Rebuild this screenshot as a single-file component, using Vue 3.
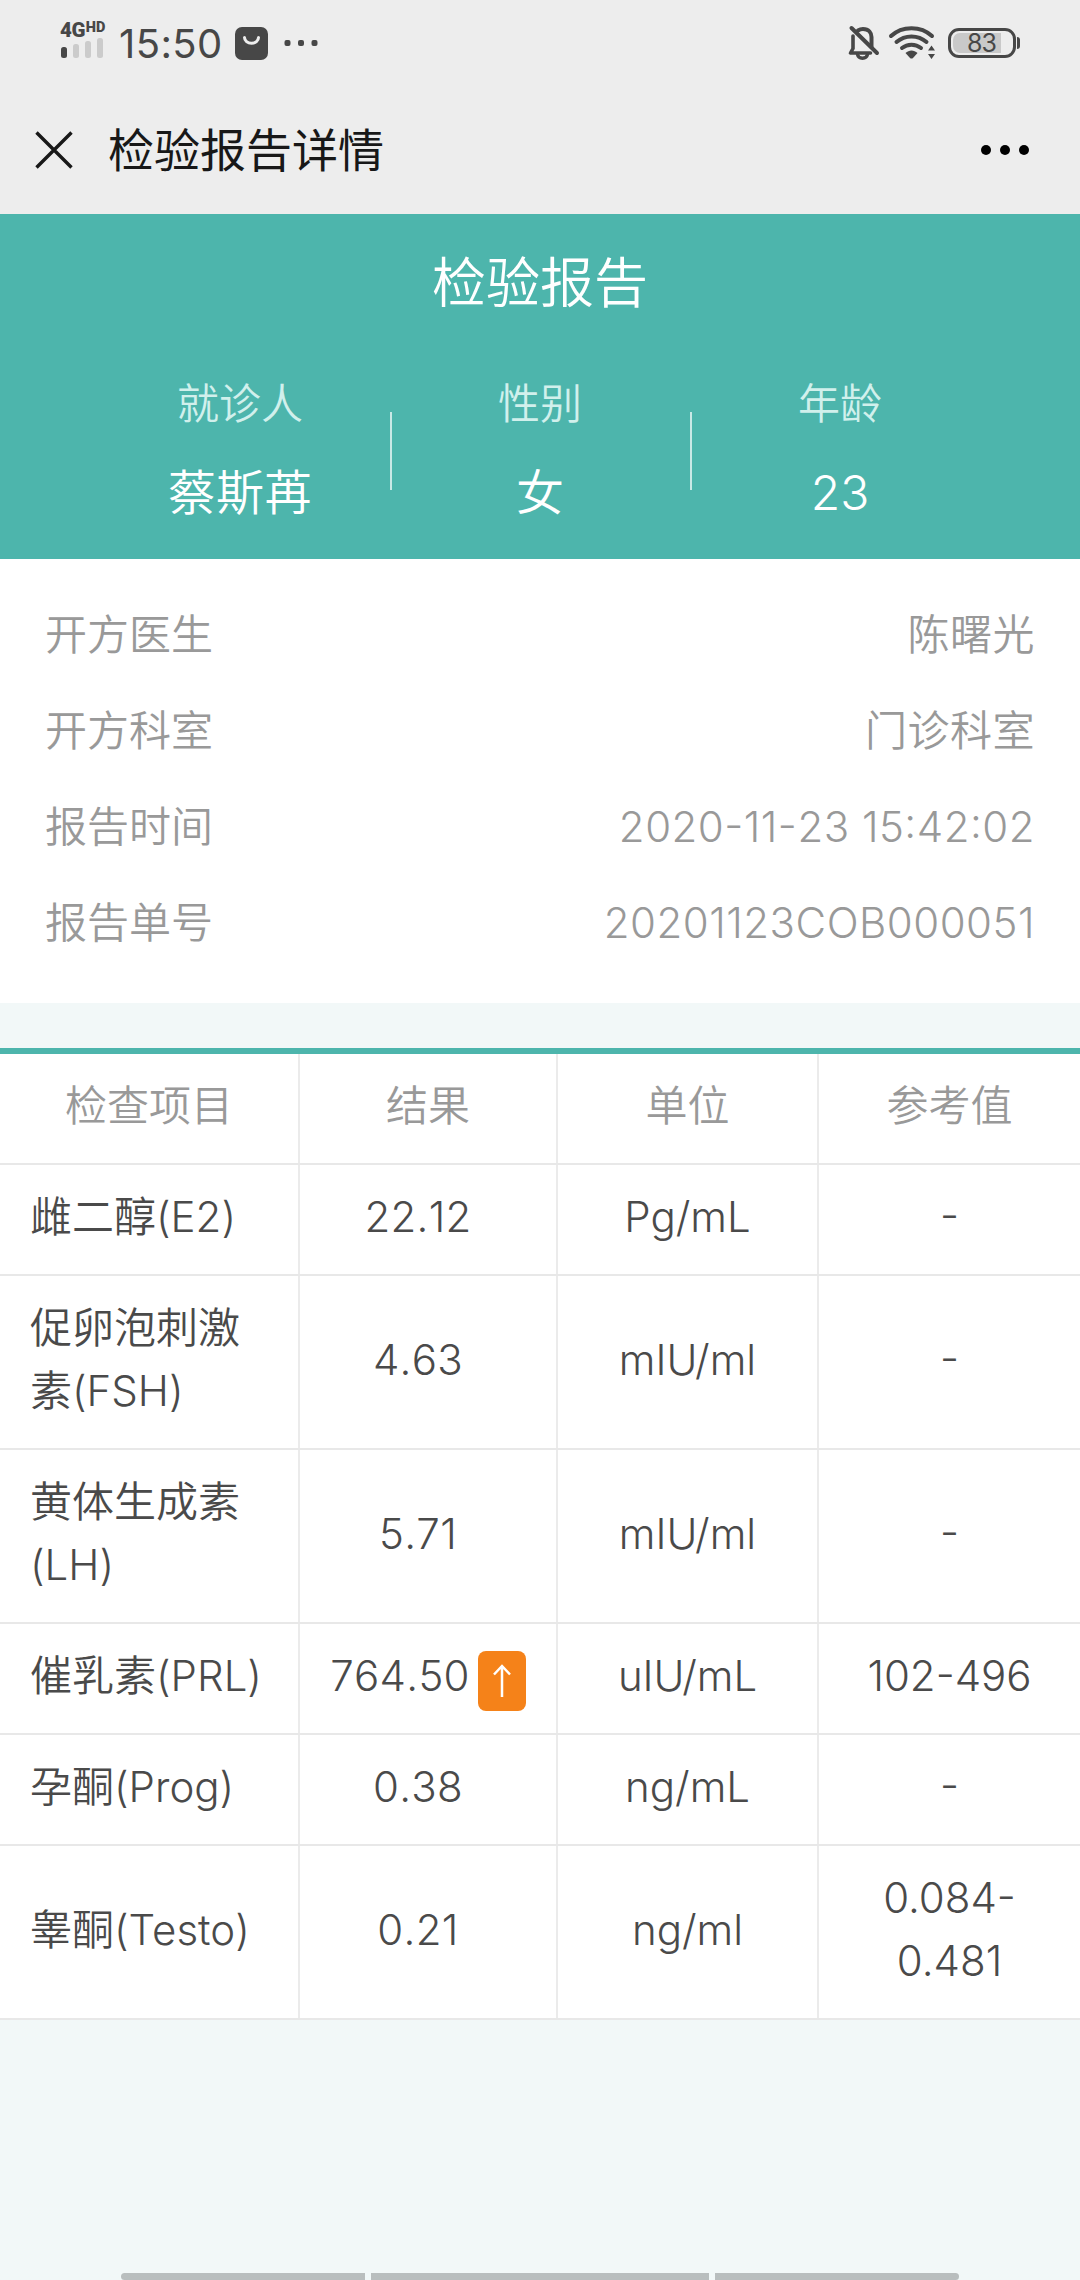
<template>
  <div class="page">
    <header class="topbar">
      <div class="status">
        <div class="signal">
          <div class="network">4G<sup>HD</sup></div>
          <svg width="44" height="21" viewBox="0 0 44 21">
            <rect x="1" y="10" width="6" height="11" rx="2.5" fill="#474747" />
            <rect x="13" y="7" width="6" height="14" rx="2.5" fill="#cbcbcb" />
            <rect x="25" y="4" width="6" height="17" rx="2.5" fill="#cbcbcb" />
            <rect x="37" y="1" width="6" height="20" rx="2.5" fill="#cbcbcb" />
          </svg>
        </div>
        <span class="clock">15:50</span>
        <svg class="app-icon" width="33" height="33" viewBox="0 0 33 33">
          <rect width="33" height="33" rx="7" fill="#474747" />
          <path d="M9.5 10.5a7 5.8 0 0 0 14 0" fill="none" stroke="#ededed" stroke-width="3" stroke-linecap="round" />
        </svg>
        <svg class="more-icon" width="34" height="8" viewBox="0 0 34 8">
          <rect x="0.5" y="1" width="6" height="6" rx="2" fill="#474747" />
          <rect x="14" y="1" width="6" height="6" rx="2" fill="#474747" />
          <rect x="27.5" y="1" width="6" height="6" rx="2" fill="#474747" />
        </svg>
        <div class="status-right">
          <svg width="32" height="36" viewBox="0 0 32 36">
            <g fill="none" stroke="#474747" stroke-width="4" stroke-linecap="round" stroke-linejoin="round">
              <path d="M5 11v12.500l-2.500 4.500h20" stroke-width="3.600" />
              <path d="M10 5.500c1.500-1 3-1.500 5-1.500 6 0 8.500 4 8.500 8v10" />
              <path d="M3.500 3l25.500 25" />
              <path d="M9.500 29.500c1 5 9 5 10 0" stroke-width="3.400" />
            </g>
          </svg>
          <svg class="wifi" width="48" height="36" viewBox="0 0 48 36">
            <g fill="none" stroke="#474747" stroke-width="4" stroke-linecap="round">
              <path d="M3 11c11-10.500 30-10.500 41 0" />
              <path d="M8.500 17c8.500-7.500 21.500-7.500 30 0" />
              <path d="M14 23c5.500-4.500 13.500-4.500 19 0" />
            </g>
            <path d="M17.500 28c3.500-3.500 8.500-3.500 12 0l-4.500 5q-1.500 1.200-3 0z" fill="#474747" />
            <path d="M43.500 20.500l3.500 5h-7zM43.500 34l3.500-5h-7z" fill="#474747" />
          </svg>
          <div class="battery">
            <span class="level"><b>83</b></span>
          </div>
        </div>
      </div>
      <div class="navbar">
        <svg width="38" height="38" viewBox="0 0 38 38">
          <path d="M1.500 1.500l35 35M36.500 1.500l-35 35" stroke="#181818" stroke-width="3.400" />
        </svg>
        <h1>检验报告详情</h1>
        <svg class="menu" width="50" height="12" viewBox="0 0 50 12">
          <circle cx="6" cy="6" r="5" />
          <circle cx="25" cy="6" r="5" />
          <circle cx="44" cy="6" r="5" />
        </svg>
      </div>
    </header>

    <section class="summary">
      <h2>检验报告</h2>
      <div class="patient">
        <div v-for="item in patient" :key="item.label" class="patient-item">
          <span class="label">{{ item.label }}</span>
          <span class="value">{{ item.value }}</span>
        </div>
      </div>
    </section>

    <section class="info">
      <div v-for="row in info" :key="row.label" class="info-row">
        <span>{{ row.label }}</span>
        <span class="info-value">{{ row.value }}</span>
      </div>
    </section>

    <section class="report">
      <div class="row head">
        <div v-for="title in columns" :key="title" class="cell">{{ title }}</div>
      </div>
      <div v-for="item in results" :key="item.name" class="row">
        <div class="cell name">{{ item.name }}</div>
        <div class="cell result" :class="{ normal: !item.high }">
          {{ item.result }}
          <span v-if="item.high" class="flag">
            <svg width="18" height="34" viewBox="0 0 18 34">
              <path d="M9 33V2M1 10.500l8-8.500 8 8.500" fill="none" stroke="#fff" stroke-width="2.500" />
            </svg>
          </span>
        </div>
        <div class="cell">{{ item.unit }}</div>
        <div class="cell range">{{ item.range }}</div>
      </div>
    </section>

    <footer class="gesture-bar">
      <i></i><i class="middle"></i><i></i>
    </footer>
  </div>
</template>

<script setup>
const patient = [
  { label: '就诊人', value: '蔡斯苒' },
  { label: '性别', value: '女' },
  { label: '年龄', value: '23' },
];

const info = [
  { label: '开方医生', value: '陈曙光' },
  { label: '开方科室', value: '门诊科室' },
  { label: '报告时间', value: '2020-11-23 15:42:02' },
  { label: '报告单号', value: '20201123COB000051' },
];

const columns = ['检查项目', '结果', '单位', '参考值'];

const results = [
  { name: '雌二醇(E2)', result: '22.12', unit: 'Pg/mL', range: '-' },
  { name: '促卵泡刺激素(FSH)', result: '4.63', unit: 'mIU/ml', range: '-' },
  { name: '黄体生成素(LH)', result: '5.71', unit: 'mIU/ml', range: '-' },
  { name: '催乳素(PRL)', result: '764.50', unit: 'uIU/mL', range: '102-496', high: true },
  { name: '孕酮(Prog)', result: '0.38', unit: 'ng/mL', range: '-' },
  { name: '睾酮(Testo)', result: '0.21', unit: 'ng/ml', range: '0.084-0.481' },
];
</script>

<style>
body {
  background: #f2f8f8;
}
</style>

<style scoped>
.page {
  display: flex;
  flex-direction: column;
  width: 1080px;
  height: 2280px;
  background: #f2f8f8;
  font-family: Inter, "Noto Sans CJK SC", sans-serif;
  font-size: 42px;
  font-weight: 350;
  line-height: 63px;
  box-sizing: border-box;
}

.page * {
  box-sizing: border-box;
}

svg {
  display: block;
  flex-shrink: 0;
}

.topbar {
  height: 214px;
  background: #ededed;
}

.status {
  display: flex;
  align-items: center;
  height: 86px;
  padding: 0 60px;
  color: #474747;
}

.signal {
  width: 48px;
  height: 42px;
}

.network {
  display: flex;
  height: 15px;
  font-family: Roboto, sans-serif;
  font-size: 20.5px;
  font-weight: 900;
  line-height: 16px;
  letter-spacing: -0.5px;
}

.network sup {
  font-size: 14.5px;
  line-height: 12px;
  letter-spacing: 0;
  margin-left: 1px;
}

.clock {
  width: 115px;
  padding: 1px 0 0 11px;
  font-size: 40px;
  font-weight: 400;
  font-kerning: none;
  letter-spacing: 0.4px;
}

.app-icon {
  margin-left: 12px;
}

.more-icon {
  margin-left: 16px;
}

.status-right {
  display: flex;
  align-items: center;
  margin-left: auto;
}

.wifi {
  margin-left: 8px;
}

.battery {
  position: relative;
  width: 68px;
  height: 30px;
  margin: 0 4px 0 12px;
  padding: 2px;
  border: 3px solid #474747;
  border-radius: 11px;
}

.battery::after {
  content: "";
  position: absolute;
  right: -7px;
  top: 6px;
  width: 3px;
  height: 12px;
  border-radius: 0 3px 3px 0;
  background: #474747;
}

.level {
  display: block;
  width: 48px;
  height: 20px;
  border-radius: 7px 0 0 7px;
  background: #c9c9c9;
  padding-left: 14px;
}

.level b {
  font-size: 25px;
  font-weight: 400;
  line-height: 20px;
  display: block;
  letter-spacing: -1px;
}

.navbar {
  display: flex;
  align-items: center;
  height: 128px;
  padding: 0 50px 0 35px;
}

.navbar h1 {
  margin: 0 0 0 35px;
  color: #181818;
  font-size: 46px;
  font-weight: 400;
}

.menu {
  margin-left: auto;
}

.summary {
  height: 345px;
  padding: 38px 90px 0;
  background: #4db5ac;
  color: #fff;
  text-align: center;
}

.summary h2 {
  margin: 0;
  font-size: 54px;
  font-weight: 350;
  line-height: 64px;
}

.patient {
  display: flex;
  margin-top: 56px;
}

.patient-item {
  position: relative;
  display: flex;
  flex: 1;
  flex-direction: column;
}

.patient-item + .patient-item::before {
  content: "";
  position: absolute;
  left: 0;
  top: 40px;
  width: 2px;
  height: 78px;
  background: #c9e9e6;
}

.label {
  color: #d1f0ec;
}

.value {
  margin-top: 26px;
  font-size: 48px;
}

.info {
  height: 444px;
  padding: 28px 45px 0;
  background: #fff;
  color: #999;
}

.info-row {
  display: flex;
  justify-content: space-between;
  line-height: 96px;
}

.info-value {
  font-kerning: none;
  letter-spacing: 0.5px;
}

.info-value,
.range {
  font-feature-settings: "case";
}

.report {
  margin-top: 45px;
  border-top: 6px solid #4db5ac;
  background: #fff;
  color: #4a4a4a;
}

.row {
  display: grid;
  grid-template-columns: 300px 258px 261px 261px;
  border-bottom: 2px solid #e8e8e8;
}

.head {
  color: #999;
}

.cell {
  display: flex;
  align-items: center;
  justify-content: center;
  padding: 20px 30px 26px;
  border-right: 2px solid #ebebeb;
  text-align: center;
}

.cell:last-child {
  border-right: 0;
}

.name {
  justify-content: flex-start;
  text-align: left;
}

.result {
  font-kerning: none;
  letter-spacing: 0.3px;
}

.normal {
  padding-right: 50px;
}

.flag {
  display: flex;
  align-items: center;
  justify-content: center;
  width: 48px;
  height: 60px;
  margin: 4px 0 -7px 8px;
  border-radius: 8px;
  background: #f58219;
}

.gesture-bar {
  display: flex;
  gap: 6px;
  width: 838px;
  height: 7px;
  margin: auto auto 0;
  border-radius: 4px;
  overflow: hidden;
}

.gesture-bar i {
  width: 244px;
  background: #b9bebe;
}

.gesture-bar .middle {
  width: 338px;
}
</style>
